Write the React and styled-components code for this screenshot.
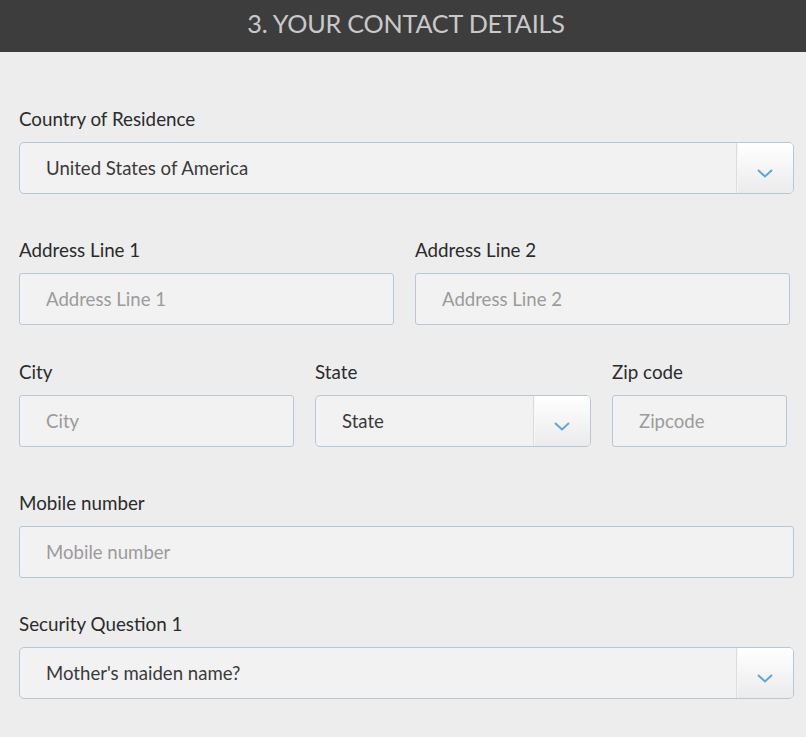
import React from "react";
import styled, { createGlobalStyle } from "styled-components";

const GlobalStyle = createGlobalStyle`
  body {
    margin: 0;
    background: #ededed;
    font-family: Lato, "Open Sans", sans-serif;
  }
`;

const Page = styled.div`
  min-height: 737px;
  background: #ededed;
`;

const Header = styled.h2`
  margin: 0;
  height: 52px;
  background: #3d3d3d;
  color: #c9c9c9;
  font-size: 25.2px;
  font-weight: 400;
  line-height: 46px;
  text-align: center;
  text-transform: uppercase;
  letter-spacing: -0.2px;
  padding-left: 6px;
`;

const Form = styled.form`
  padding: 56px 12px 0 19px;
  width: 775px;
`;

const Row = styled.div`
  display: grid;
  grid-template-columns: ${(p) => p.$cols || "1fr"};
  column-gap: 21px;
  margin-top: ${(p) => p.$top || 0}px;
`;

const Field = styled.div`
  display: flex;
  flex-direction: column;
`;

const Label = styled.label`
  font-size: 18.8px;
  line-height: 22px;
  color: #2b2b2b;
  margin-bottom: 12px;
`;

const TextInput = styled.input`
  box-sizing: border-box;
  height: 52px;
  width: 100%;
  padding: 0 26px;
  border: 1px solid #b8c7d6;
  border-radius: 3px;
  background: #f2f2f2;
  font-family: inherit;
  font-size: 18.6px;
  color: #3a3a3a;
  outline: none;

  &::placeholder {
    color: #9b9b9b;
  }
`;

const SelectBox = styled.div`
  box-sizing: border-box;
  height: 52px;
  display: flex;
  align-items: stretch;
  border: 1px solid #b8c7d6;
  border-radius: 5px;
  background: #f2f2f2;
  overflow: hidden;
`;

const SelectValue = styled.span`
  flex: 1;
  display: flex;
  align-items: center;
  padding-left: 26px;
  font-size: 18.6px;
  color: #3a3a3a;
`;

const SelectButton = styled.span`
  width: 57px;
  display: flex;
  align-items: center;
  justify-content: center;
  padding-top: 10px;
  box-sizing: border-box;
  border-left: 1px solid #dcdcdc;
  box-shadow: inset 1px 0 0 #f7f7f7;
  background: linear-gradient(#ffffff, #ebebeb);
`;

function Chevron() {
  return (
    <svg width="16" height="9" viewBox="0 0 16 9">
      <path d="M1 1l7 6.5L15 1" fill="none" stroke="#5fa6da" strokeWidth="2" />
    </svg>
  );
}

function Select({ value }) {
  return (
    <SelectBox>
      <SelectValue>{value}</SelectValue>
      <SelectButton>
        <Chevron />
      </SelectButton>
    </SelectBox>
  );
}

function TextField({ label, placeholder }) {
  return (
    <Field>
      <Label>{label}</Label>
      <TextInput placeholder={placeholder || label} />
    </Field>
  );
}

export default function App() {
  return (
    <Page>
      <GlobalStyle />
      <Header>3. Your contact details</Header>
      <Form>
        <Row>
          <Field>
            <Label>Country of Residence</Label>
            <Select value="United States of America" />
          </Field>
        </Row>
        <Row $cols="375px 375px" $top={45}>
          <TextField label="Address Line 1" />
          <TextField label="Address Line 2" />
        </Row>
        <Row $cols="275px 276px 175px" $top={36}>
          <TextField label="City" />
          <Field>
            <Label>State</Label>
            <Select value="State" />
          </Field>
          <TextField label="Zip code" placeholder="Zipcode" />
        </Row>
        <Row $top={45}>
          <TextField label="Mobile number" />
        </Row>
        <Row $top={35}>
          <Field>
            <Label>Security Question 1</Label>
            <Select value="Mother's maiden name?" />
          </Field>
        </Row>
      </Form>
    </Page>
  );
}
